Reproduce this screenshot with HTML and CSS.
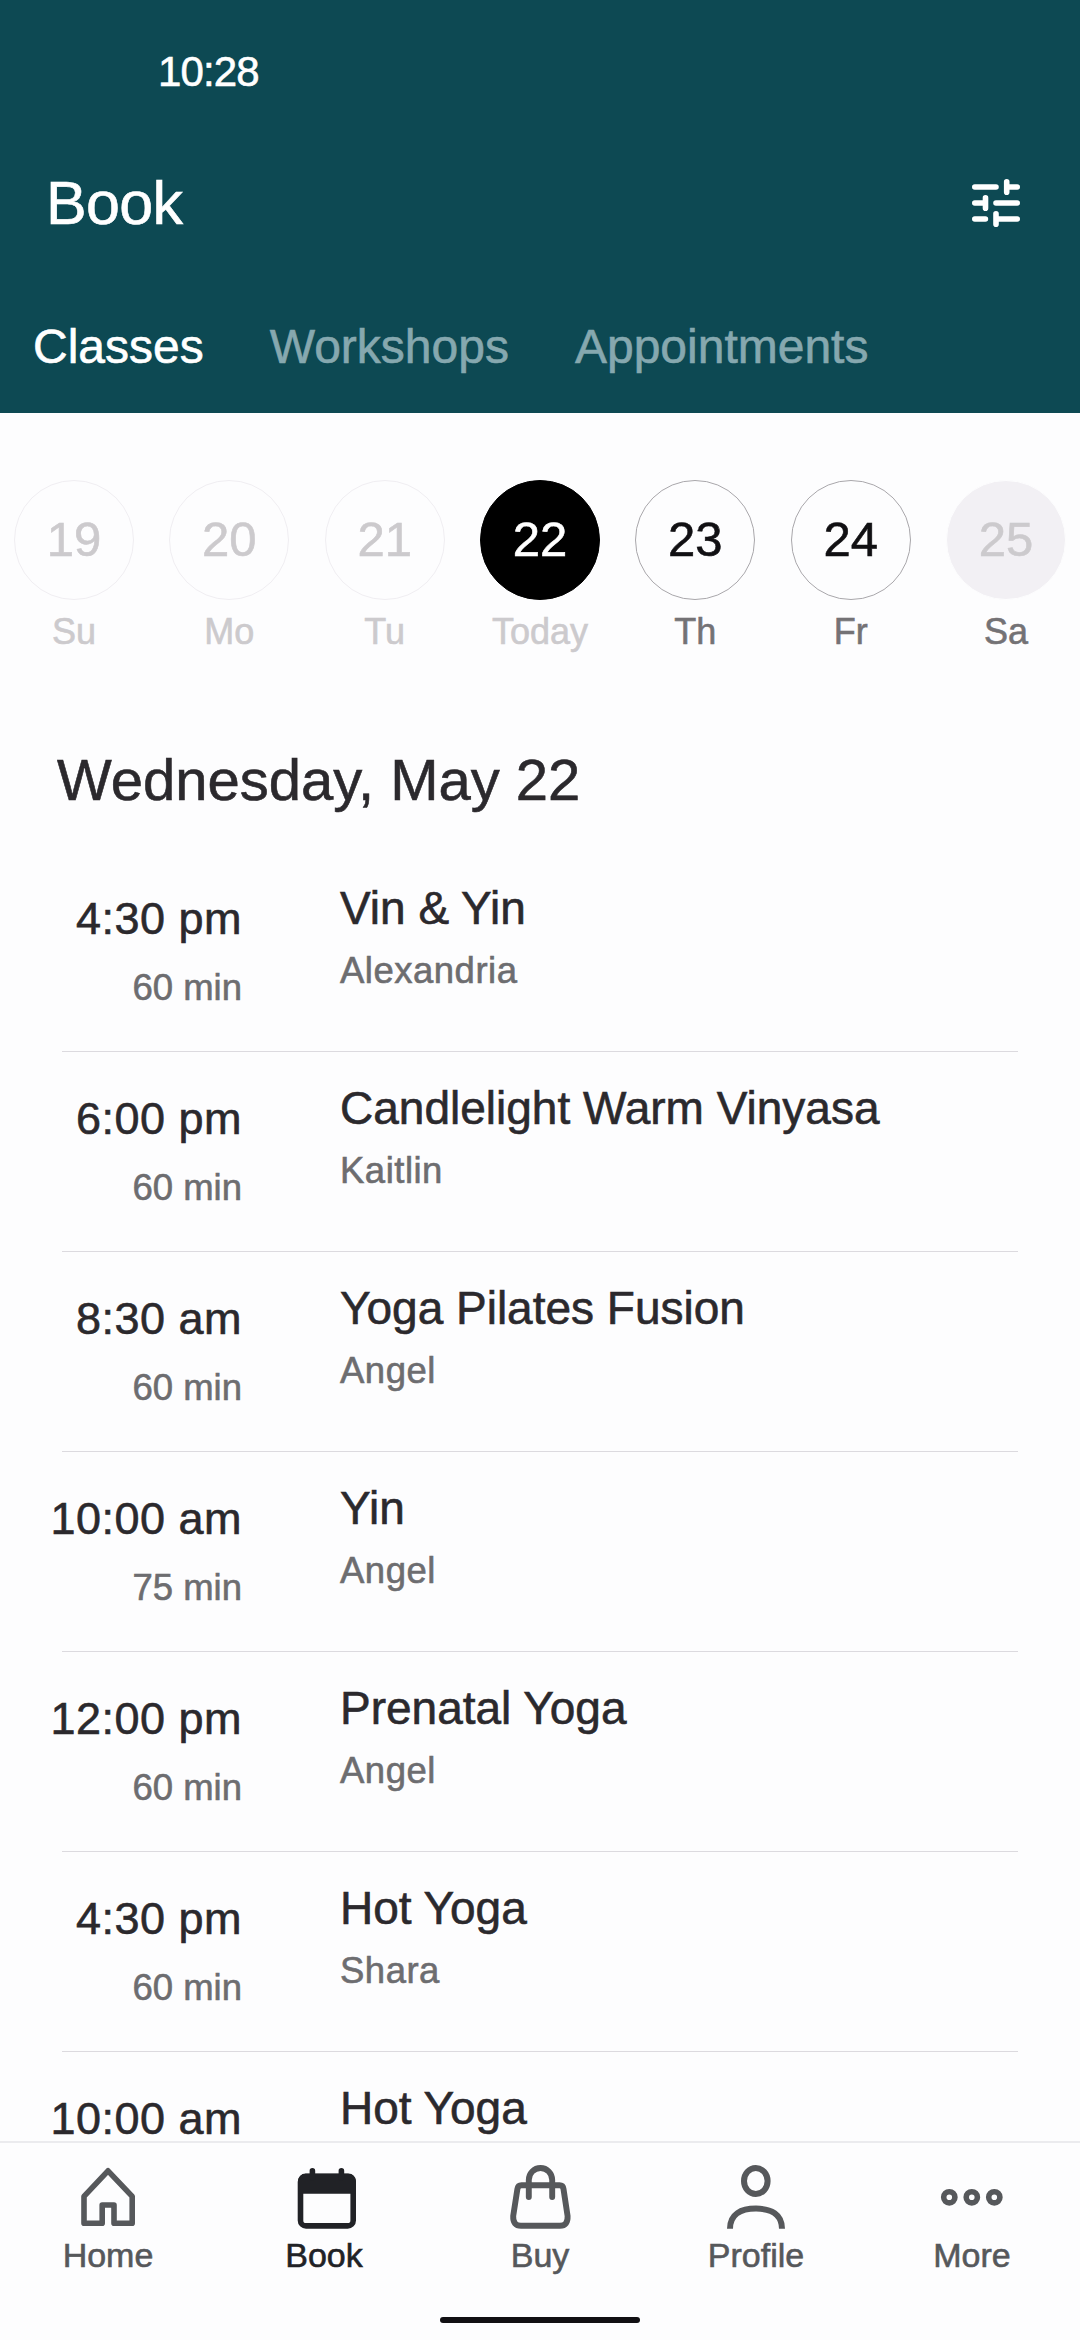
FILE: index.html
```html
<!DOCTYPE html>
<html lang="en">
<head>
<meta charset="utf-8">
<title>Book</title>
<link rel="stylesheet" href="styles.css">
</head>
<body>
<div class="app">
  <header class="header">
    <div class="status">10:28</div>
    <div class="title-row">
      <h1 class="title">Book</h1>
      <svg class="filter" viewBox="0 0 48 48" fill="none" stroke="currentColor" stroke-width="5.6" stroke-linecap="round">
        <path d="M2.8 8H24M34.7 2.8V13.2M34.7 8H45.2M2.8 24H13.5M13.5 18.8V29.2M24 24H45.2M2.8 40H13.4M24 34.8V45.2M24 40H45.2"/>
      </svg>
    </div>
    <nav class="tabs">
      <span class="tab tab-active">Classes</span>
      <span class="tab">Workshops</span>
      <span class="tab">Appointments</span>
    </nav>
  </header>

  <main class="content">
    <div class="week">
      <div class="day day-past"><span class="num">19</span><span class="name">Su</span></div>
      <div class="day day-past"><span class="num">20</span><span class="name">Mo</span></div>
      <div class="day day-past"><span class="num">21</span><span class="name">Tu</span></div>
      <div class="day day-today"><span class="num">22</span><span class="name">Today</span></div>
      <div class="day"><span class="num">23</span><span class="name">Th</span></div>
      <div class="day"><span class="num">24</span><span class="name">Fr</span></div>
      <div class="day day-closed"><span class="num">25</span><span class="name">Sa</span></div>
    </div>

    <h2 class="date">Wednesday, May 22</h2>

    <div class="list">
      <div class="row"><div class="when"><div class="time">4:30 pm</div><div class="length">60 min</div></div><div class="what"><div class="class-name">Vin &amp; Yin</div><div class="teacher">Alexandria</div></div></div>
      <hr class="divider">
      <div class="row"><div class="when"><div class="time">6:00 pm</div><div class="length">60 min</div></div><div class="what"><div class="class-name">Candlelight Warm Vinyasa</div><div class="teacher">Kaitlin</div></div></div>
      <hr class="divider">
      <div class="row"><div class="when"><div class="time">8:30 am</div><div class="length">60 min</div></div><div class="what"><div class="class-name">Yoga Pilates Fusion</div><div class="teacher">Angel</div></div></div>
      <hr class="divider">
      <div class="row"><div class="when"><div class="time">10:00 am</div><div class="length">75 min</div></div><div class="what"><div class="class-name">Yin</div><div class="teacher">Angel</div></div></div>
      <hr class="divider">
      <div class="row"><div class="when"><div class="time">12:00 pm</div><div class="length">60 min</div></div><div class="what"><div class="class-name">Prenatal Yoga</div><div class="teacher">Angel</div></div></div>
      <hr class="divider">
      <div class="row"><div class="when"><div class="time">4:30 pm</div><div class="length">60 min</div></div><div class="what"><div class="class-name">Hot Yoga</div><div class="teacher">Shara</div></div></div>
      <hr class="divider">
      <div class="row"><div class="when"><div class="time">10:00 am</div></div><div class="what"><div class="class-name">Hot Yoga</div></div></div>
    </div>
  </main>

  <footer class="footer">
    <nav class="bottom-nav">
      <div class="item">
        <svg class="icon" viewBox="0 0 72 72" fill="none" stroke="currentColor" stroke-width="5.6" stroke-linejoin="round"><path d="M36 10.8 12 36.4V63.2H30.2V45H42V63.2H60.2V36.4Z"/></svg>
        <span>Home</span>
      </div>
      <div class="item item-active">
        <svg class="icon" viewBox="0 0 72 72" fill="none" stroke="currentColor" stroke-width="5.6"><rect x="12.5" y="16.5" width="52.7" height="49.4" rx="5.5"/><path d="M10 21a7.5 7.5 0 0 1 7.5-7.5H60.500a7.500 7.500 0 0 1 7.500 7.500V33.800H10Z" fill="currentColor" stroke="none"/><path d="M24.400 10.800V18M53.400 10.800V18" stroke-linecap="round"/></svg>
        <span>Book</span>
      </div>
      <div class="item">
        <svg class="icon" viewBox="0 0 72 72" fill="none" stroke="currentColor" stroke-width="5.9"><path d="M17.500 25.300H55.500Q59 25.300 59.500 29L63.600 56Q64 65.800 56 65.800H17Q8.800 65.800 9.200 56L13.400 29Q14 25.300 17.500 25.300Z"/><path d="M24.800 37V20A11.700 12 0 0 1 48.200 20V37" stroke-linecap="round"/></svg>
        <span>Buy</span>
      </div>
      <div class="item">
        <svg class="icon" viewBox="0 0 72 72" fill="none" stroke="currentColor" stroke-width="6"><ellipse cx="35.800" cy="21" rx="11.800" ry="13"/><path d="M10 68.800C10 54 21 48.600 36 48.600S62 54 62 68.800"/></svg>
        <span>Profile</span>
      </div>
      <div class="item">
        <svg class="icon" viewBox="0 0 72 72" fill="none" stroke="currentColor" stroke-width="5.6"><circle cx="13.300" cy="37.300" r="5.600"/><circle cx="35.800" cy="37.300" r="5.600"/><circle cx="58.300" cy="37.300" r="5.600"/></svg>
        <span>More</span>
      </div>
    </nav>
    <div class="home-bar"></div>
  </footer>
</div>
</body>
</html>
```
FILE: styles.css
```css
* { box-sizing: border-box; }

body {
  margin: 0;
  font-family: "Liberation Sans", Arial, sans-serif;
  background: #fdfdfe;
  color: #2b292d;
  -webkit-text-stroke: 0.6px currentColor;
}

.app {
  display: flex;
  flex-direction: column;
  width: 1080px;
  height: 2340px;
  overflow: hidden;
}

.header {
  flex: none;
  height: 413px;
  background: #0d4953;
  color: #fff;
}

.status {
  height: 143px;
  padding-left: 158px;
  font-size: 42px;
  line-height: 143px;
  letter-spacing: -0.9px;
}

.title-row {
  display: flex;
  align-items: center;
  justify-content: space-between;
  height: 119px;
  padding: 0 60px 0 46px;
}

.title {
  margin: 0;
  font-size: 61px;
  font-weight: 400;
  line-height: 70px;
  letter-spacing: -0.7px;
}

.filter { width: 48px; height: 48px; }

.tabs {
  display: flex;
  gap: 66px;
  padding: 57px 0 0 33px;
  font-size: 48px;
  line-height: 56px;
}

.tab { color: #86a8af; }
.tab-active { color: #fff; }

.content {
  flex: 1;
  min-height: 0;
  overflow: hidden;
  padding-top: 67px;
}

.week {
  display: flex;
  justify-content: space-between;
  padding: 0 14px;
}

.day {
  display: flex;
  flex-direction: column;
  align-items: center;
  gap: 12px;
  width: 120px;
  color: #747275;
}

.num {
  width: 120px;
  height: 120px;
  border: 1px solid #a9a7ab;
  border-radius: 50%;
  color: #111013;
  font-size: 49px;
  line-height: 117px;
  text-align: center;
}

.name {
  font-size: 36px;
  line-height: 40px;
}

.day-past, .day-today { color: #cccacd; }
.day-past .num { border-color: #f0eef2; color: #cccacd; }
.day-today .num { border-color: #000; background: #000; color: #fff; }
.day-closed .num { border-color: #fdfdfe; background: #f2f0f4; color: #cccacd; }

.date {
  margin: 93px 0 37px 57px;
  font-size: 58px;
  font-weight: 400;
  line-height: 70px;
}

.row {
  display: grid;
  grid-template-columns: 242px 1fr;
  column-gap: 98px;
  height: 199px;
}

.when {
  display: flex;
  flex-direction: column;
  gap: 19px;
  padding-top: 42px;
  text-align: right;
}

.what {
  display: flex;
  flex-direction: column;
  gap: 13px;
  padding-top: 31px;
}

.time { font-size: 45px; line-height: 50px; letter-spacing: 0.5px; }
.class-name { font-size: 46px; line-height: 50px; }
.length, .teacher { font-size: 36.5px; line-height: 50px; color: #6d6d70; }
.teacher { letter-spacing: 0.5px; }

.divider {
  height: 1px;
  margin: 0 62px;
  border: 0;
  background: #dcdadf;
}

.footer {
  display: flex;
  flex: none;
  flex-direction: column;
  align-items: center;
  height: 199px;
  border-top: 2px solid #ebebee;
  background: #fdfdfe;
}

.bottom-nav {
  display: grid;
  grid-template-columns: repeat(5, 216px);
  height: 174px;
  padding-top: 17px;
}

.item {
  display: flex;
  flex-direction: column;
  align-items: center;
  gap: 3px;
  color: #56585b;
  font-size: 34px;
  line-height: 40px;
}

.item-active { color: #212226; }
.icon { width: 72px; height: 72px; }

.home-bar {
  width: 200px;
  height: 6px;
  border-radius: 3px;
  background: #111013;
}
```
